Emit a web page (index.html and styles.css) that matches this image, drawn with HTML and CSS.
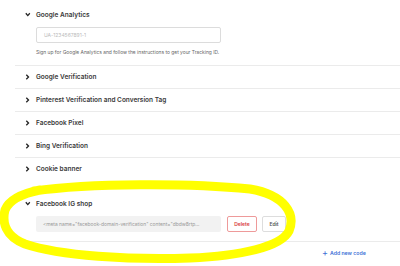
FILE: index.html
```html
<!DOCTYPE html>
<html>
<head>
    <title>Tracking codes</title>
    <link rel="stylesheet" href="styles.css">
</head>
<body>
    <div class="panel">
        <div class="item open">
            <div class="item-head">
                <svg class="chev" width="11" height="6" viewBox="0 0 11 6"><polyline points="0.8,1.3 2.8,3.6 4.8,1.3" /></svg>
                Google Analytics
            </div>
            <div class="item-body">
                <div class="field">UA-1234567891-1</div>
                <p class="hint">Sign up for Google Analytics and follow the instructions to get your Tracking ID.</p>
            </div>
        </div>
        <div class="item">
            <div class="item-head">
                <svg class="chev" width="11" height="6" viewBox="0 0 11 6"><polyline points="1.3,0.8 3.5,3 1.3,5.2" /></svg>
                Google Verification
            </div>
        </div>
        <div class="item">
            <div class="item-head">
                <svg class="chev" width="11" height="6" viewBox="0 0 11 6"><polyline points="1.3,0.8 3.5,3 1.3,5.2" /></svg>
                Pinterest Verification and Conversion Tag
            </div>
        </div>
        <div class="item">
            <div class="item-head">
                <svg class="chev" width="11" height="6" viewBox="0 0 11 6"><polyline points="1.3,0.8 3.5,3 1.3,5.2" /></svg>
                Facebook Pixel
            </div>
        </div>
        <div class="item">
            <div class="item-head">
                <svg class="chev" width="11" height="6" viewBox="0 0 11 6"><polyline points="1.3,0.8 3.5,3 1.3,5.2" /></svg>
                Bing Verification
            </div>
        </div>
        <div class="item last">
            <div class="item-head">
                <svg class="chev" width="11" height="6" viewBox="0 0 11 6"><polyline points="1.3,0.8 3.5,3 1.3,5.2" /></svg>
                Cookie banner
            </div>
        </div>

        <div class="item custom">
            <div class="item-head">
                <svg class="chev" width="11" height="6" viewBox="0 0 11 6"><polyline points="0.8,1.3 2.8,3.6 4.8,1.3" /></svg>
                Facebook IG shop
            </div>
            <div class="code-row">
                <div class="code">&lt;meta name="facebook-domain-verification" content="dbdw8rtp...</div>
                <button class="btn btn-delete">Delete</button>
                <button class="btn btn-edit">Edit</button>
            </div>
        </div>
        <div class="add-row">
            <span class="add"><span class="plus">+</span>Add new code</span>
        </div>
    </div>

    <svg class="scribble" width="400" height="266" viewBox="0 0 400 266">
        <path d="M 34 191 C 90 183 190 183 250 189 C 285 195 296 214 289 231 C 281 247 240 256 190 258 C 130 260 60 256 25 244 C 5 236 2 222 5 210 C 9 200 20 194 40 190"
              fill="none" stroke="#ffff00" stroke-width="9" stroke-linecap="round" stroke-linejoin="round"/>
    </svg>
</body>
</html>
```

FILE: styles.css
```css
body {
    margin: 0;
    background: #fff;
    font-family: "Inter", "Liberation Sans", sans-serif;
    color: #333;
}
.panel {
    padding: 4px 0 0 15px;
}
.item {
    border-bottom: 1px solid #ebebeb;
}
.item.last {
    border-bottom: none;
}
.item-head {
    height: 22px;
    display: flex;
    align-items: center;
    padding-left: 10px;
    font-size: 6.5px;
    font-weight: 600;
    color: #3a3a3a;
}
.chev {
    flex: none;
    fill: none;
    stroke: #222;
    stroke-width: 1.3;
}
.item-body {
    padding: 1px 0 10px 21px;
}
.field {
    box-sizing: border-box;
    width: 185px;
    height: 16px;
    border: 1px solid #dcdcdc;
    border-radius: 2px;
    padding-left: 7px;
    display: flex;
    align-items: center;
    font-size: 5px;
    color: #bbb;
}
.hint {
    margin: 6px 0 0;
    font-size: 4.9px;
    line-height: 6px;
    color: #666;
}
.custom {
    margin-top: 13px;
}
.code-row {
    display: flex;
    align-items: center;
    padding: 1px 0 9px 21px;
}
.code {
    box-sizing: border-box;
    width: 185px;
    height: 16px;
    background: #f2f2f2;
    border-radius: 2px;
    padding-left: 7px;
    display: flex;
    align-items: center;
    font-size: 4.9px;
    color: #999;
    white-space: nowrap;
    overflow: hidden;
}
.btn {
    box-sizing: border-box;
    height: 16px;
    padding: 0;
    background: #fff;
    border: 1px solid #ddd;
    border-radius: 2px;
    font-family: inherit;
    font-size: 5px;
    font-weight: 600;
    color: #555;
}
.btn-delete {
    width: 30px;
    margin-left: 6px;
    border-color: #ee9a9a;
    color: #d83a3a;
}
.btn-edit {
    width: 24px;
    margin-left: 5px;
}
.add-row {
    height: 21px;
    display: flex;
    align-items: center;
    padding-left: 307px;
}
.add {
    display: flex;
    align-items: center;
    gap: 2px;
    font-size: 5.2px;
    font-weight: 600;
    color: #3d6fd6;
}
.plus {
    font-size: 9px;
    font-weight: 400;
}
.scribble {
    position: absolute;
    left: 0;
    top: 0;
}
```
